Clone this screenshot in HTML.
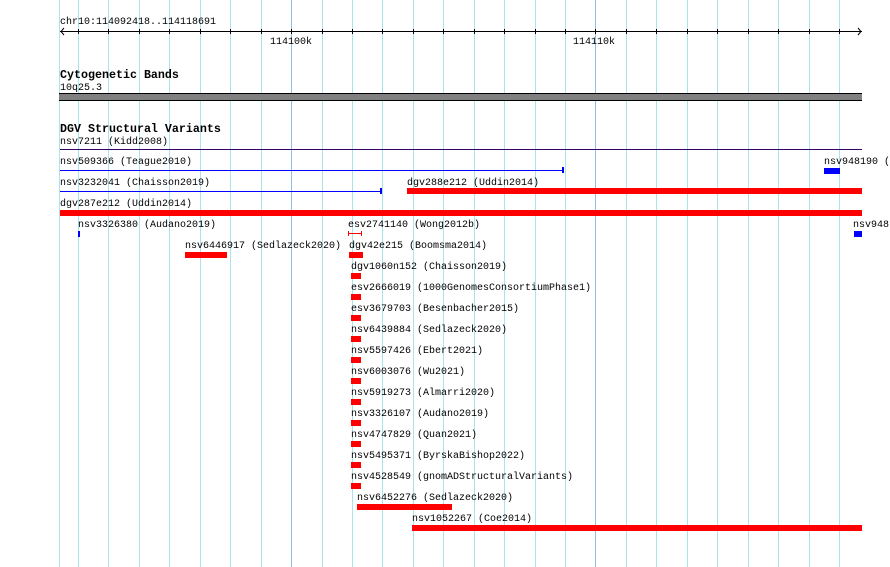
<!DOCTYPE html>
<html><head><meta charset="utf-8"><style>
html,body{margin:0;padding:0;background:#fff;width:890px;height:567px;overflow:hidden}
svg text{font-family:"Liberation Mono",monospace;font-size:10px;fill:#000}
svg text.b{font-size:11.67px;font-weight:bold}
</style></head><body>
<svg width="890" height="567" xmlns="http://www.w3.org/2000/svg" shape-rendering="crispEdges">
<g id="grid" stroke="#a8e4ea" stroke-width="1"></g>
<script>
var g=document.getElementById('grid');
var xs=[59.5];for(var k=0;k<26;k++)xs.push(Math.round(78+30.44*k)+0.5);
xs.forEach(function(x,i){var l=document.createElementNS('http://www.w3.org/2000/svg','line');l.setAttribute('x1',x);l.setAttribute('x2',x);l.setAttribute('y1',0);l.setAttribute('y2',567);if(i==8||i==18)l.setAttribute('stroke','#8fc0e0');g.appendChild(l);});
</script>
<text x="60" y="24">chr10:114092418..114118691</text>
<line x1="60" y1="31.5" x2="862" y2="31.5" stroke="#000"/>
<polyline points="64,28 61,31.5 64,35" fill="none" stroke="#000" shape-rendering="auto"/>
<polyline points="858,28 861,31.5 858,35" fill="none" stroke="#000" shape-rendering="auto"/>
<g id="ticks" stroke="#000"></g>
<script>
var t=document.getElementById('ticks');
for(var k=0;k<26;k++){var x=Math.round(78+30.44*k)+0.5;var l=document.createElementNS('http://www.w3.org/2000/svg','line');l.setAttribute('x1',x);l.setAttribute('x2',x);l.setAttribute('y1',29);l.setAttribute('y2',34);t.appendChild(l);}
</script>
<text x="270" y="44">114100k</text>
<text x="573" y="44">114110k</text>
<text x="60" y="78" class="b">Cytogenetic Bands</text>
<text x="60" y="90">10q25.3</text>
<rect x="59" y="93" width="803" height="8" fill="#000"/>
<rect x="59" y="94" width="803" height="6" fill="#808080"/>
<text x="60" y="132" class="b">DGV Structural Variants</text>
<text x="60" y="144">nsv7211 (Kidd2008)</text>
<rect x="60" y="149" width="802" height="1" fill="#330066"/>

<text x="60" y="164">nsv509366 (Teague2010)</text>
<rect x="60" y="170" width="503" height="1" fill="#0000ff"/>
<rect x="562" y="167" width="2" height="6" fill="#0000ff"/>
<text x="824" y="164">nsv948190 (</text>
<rect x="824" y="168" width="16" height="6" fill="#0000ff"/>

<text x="60" y="185">nsv3232041 (Chaisson2019)</text>
<rect x="60" y="191" width="321" height="1" fill="#0000ff"/>
<rect x="380" y="188" width="2" height="6" fill="#0000ff"/>
<text x="407" y="185">dgv288e212 (Uddin2014)</text>
<rect x="407" y="188" width="455" height="6" fill="#ff0000"/>

<text x="60" y="206">dgv287e212 (Uddin2014)</text>
<rect x="60" y="210" width="802" height="6" fill="#ff0000"/>

<text x="78" y="227">nsv3326380 (Audano2019)</text>
<rect x="78" y="231" width="2" height="6" fill="#0000ff"/>
<text x="348" y="227">esv2741140 (Wong2012b)</text>
<rect x="348" y="233" width="13" height="1" fill="#ff0000"/>
<rect x="348" y="231" width="1" height="5" fill="#ff0000"/>
<rect x="361" y="231" width="1" height="5" fill="#ff0000"/>
<text x="853" y="227">nsv948</text>
<rect x="854" y="231" width="8" height="6" fill="#0000ff"/>

<text x="185" y="248">nsv6446917 (Sedlazeck2020)</text>
<rect x="185" y="252" width="42" height="6" fill="#ff0000"/>
<text x="349" y="248">dgv42e215 (Boomsma2014)</text>
<rect x="349" y="252" width="14" height="6" fill="#ff0000"/>

<text x="351" y="269">dgv1060n152 (Chaisson2019)</text><rect x="351" y="273" width="10" height="6" fill="#f00"/>
<text x="351" y="290">esv2666019 (1000GenomesConsortiumPhase1)</text><rect x="351" y="294" width="10" height="6" fill="#f00"/>
<text x="351" y="311">esv3679703 (Besenbacher2015)</text><rect x="351" y="315" width="10" height="6" fill="#f00"/>
<text x="351" y="332">nsv6439884 (Sedlazeck2020)</text><rect x="351" y="336" width="10" height="6" fill="#f00"/>
<text x="351" y="353">nsv5597426 (Ebert2021)</text><rect x="351" y="357" width="10" height="6" fill="#f00"/>
<text x="351" y="374">nsv6003076 (Wu2021)</text><rect x="351" y="378" width="10" height="6" fill="#f00"/>
<text x="351" y="395">nsv5919273 (Almarri2020)</text><rect x="351" y="399" width="10" height="6" fill="#f00"/>
<text x="351" y="416">nsv3326107 (Audano2019)</text><rect x="351" y="420" width="10" height="6" fill="#f00"/>
<text x="351" y="437">nsv4747829 (Quan2021)</text><rect x="351" y="441" width="10" height="6" fill="#f00"/>
<text x="351" y="458">nsv5495371 (ByrskaBishop2022)</text><rect x="351" y="462" width="10" height="6" fill="#f00"/>
<text x="351" y="479">nsv4528549 (gnomADStructuralVariants)</text><rect x="351" y="483" width="10" height="6" fill="#f00"/>
<text x="357" y="500">nsv6452276 (Sedlazeck2020)</text><rect x="357" y="504" width="95" height="6" fill="#f00"/>
<text x="412" y="521">nsv1052267 (Coe2014)</text><rect x="412" y="525" width="450" height="6" fill="#f00"/>
</svg>
</body></html>
